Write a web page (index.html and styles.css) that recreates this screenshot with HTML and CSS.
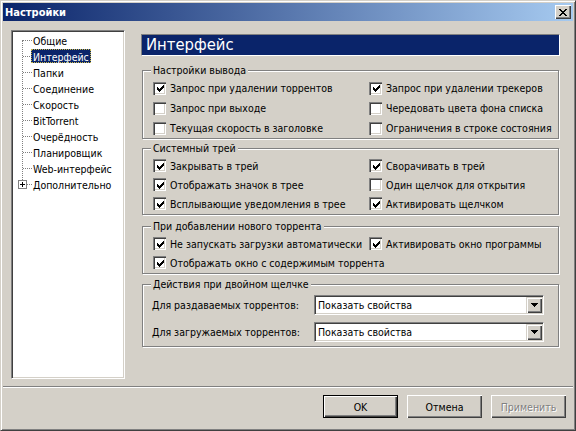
FILE: index.html
```html
<!DOCTYPE html>
<html lang="ru">
<head>
<meta charset="utf-8">
<title>Настройки</title>
<link rel="stylesheet" href="styles.css">
</head>
<body>
<svg class="defs" width="0" height="0">
  <defs>
    <path id="chk" d="M0 2h1v3H0z M1 3h1v3H1z M2 4h1v3H2z M3 3h1v3H3z M4 2h1v3H4z M5 1h1v3H5z M6 0h1v3H6z"/>
  </defs>
</svg>
<div class="window">
  <div class="titlebar">
    <span class="title">Настройки</span>
    <span class="close">
      <svg width="8" height="7" viewBox="0 0 8 7"><path d="M0 0h2v1H0z M6 0h2v1H6z M1 1h2v1H1z M5 1h2v1H5z M2 2h4v1H2z M3 3h2v1H3z M2 4h4v1H2z M1 5h2v1H1z M5 5h2v1H5z M0 6h2v1H0z M6 6h2v1H6z" fill="#000"/></svg>
    </span>
  </div>
  <div class="main">
    <div class="tree">
      <ul class="nodes">
        <li><span class="txt">Общие</span></li>
        <li class="sel"><span class="txt">Интерфейс</span></li>
        <li><span class="txt">Папки</span></li>
        <li><span class="txt">Соединение</span></li>
        <li><span class="txt">Скорость</span></li>
        <li><span class="txt">BitTorrent</span></li>
        <li><span class="txt">Очерёдность</span></li>
        <li><span class="txt">Планировщик</span></li>
        <li><span class="txt">Web-интерфейс</span></li>
        <li class="exp"><span class="plus"><svg width="5" height="5" viewBox="0 0 5 5"><path d="M0 2h5v1H0z M2 0h1v5H2z" fill="#000"/></svg></span><span class="txt">Дополнительно</span></li>
      </ul>
    </div>
    <div class="panel">
      <div class="header">Интерфейс</div>

      <div class="group g1">
        <div class="legend">Настройки вывода</div>
        <div class="grid">
          <div class="row"><span class="cb"><svg width="7" height="7"><use href="#chk"/></svg></span>Запрос при удалении торрентов</div>
          <div class="row"><span class="cb"><svg width="7" height="7"><use href="#chk"/></svg></span>Запрос при удалении трекеров</div>
          <div class="row"><span class="cb"></span>Запрос при выходе</div>
          <div class="row"><span class="cb"></span>Чередовать цвета фона списка</div>
          <div class="row"><span class="cb"></span>Текущая скорость в заголовке</div>
          <div class="row"><span class="cb"></span>Ограничения в строке состояния</div>
        </div>
      </div>

      <div class="group g2">
        <div class="legend">Системный трей</div>
        <div class="grid">
          <div class="row"><span class="cb"><svg width="7" height="7"><use href="#chk"/></svg></span>Закрывать в трей</div>
          <div class="row"><span class="cb"><svg width="7" height="7"><use href="#chk"/></svg></span>Сворачивать в трей</div>
          <div class="row"><span class="cb"><svg width="7" height="7"><use href="#chk"/></svg></span>Отображать значок в трее</div>
          <div class="row"><span class="cb"></span>Один щелчок для открытия</div>
          <div class="row"><span class="cb"><svg width="7" height="7"><use href="#chk"/></svg></span>Всплывающие уведомления в трее</div>
          <div class="row"><span class="cb"><svg width="7" height="7"><use href="#chk"/></svg></span>Активировать щелчком</div>
        </div>
      </div>

      <div class="group g3">
        <div class="legend">При добавлении нового торрента</div>
        <div class="grid">
          <div class="row"><span class="cb"><svg width="7" height="7"><use href="#chk"/></svg></span>Не запускать загрузки автоматически</div>
          <div class="row"><span class="cb"><svg width="7" height="7"><use href="#chk"/></svg></span>Активировать окно программы</div>
          <div class="row wide"><span class="cb"><svg width="7" height="7"><use href="#chk"/></svg></span>Отображать окно с содержимым торрента</div>
        </div>
      </div>

      <div class="group g4">
        <div class="legend">Действия при двойном щелчке</div>
        <div class="combos">
          <span class="clabel">Для раздаваемых торрентов:</span>
          <div class="combo"><span class="cval">Показать свойства</span><span class="cbtn"><svg width="7" height="4" viewBox="0 0 7 4"><path d="M0 0h7v1H0z M1 1h5v1H1z M2 2h3v1H2z M3 3h1v1H3z" fill="#000"/></svg></span></div>
          <span class="clabel">Для загружаемых торрентов:</span>
          <div class="combo"><span class="cval">Показать свойства</span><span class="cbtn"><svg width="7" height="4" viewBox="0 0 7 4"><path d="M0 0h7v1H0z M1 1h5v1H1z M2 2h3v1H2z M3 3h1v1H3z" fill="#000"/></svg></span></div>
        </div>
      </div>
    </div>
  </div>
  <div class="sep"></div>
  <div class="buttons">
    <button class="btn default">OK</button>
    <button class="btn">Отмена</button>
    <button class="btn disabled">Применить</button>
  </div>
</div>
</body>
</html>
```
FILE: styles.css
```css
* { box-sizing: border-box; }
html, body { margin: 0; padding: 0; }
body {
  width: 576px; height: 431px; overflow: hidden;
  background: #d4d0c8;
  font-family: "DejaVu Sans Condensed", "DejaVu Sans", sans-serif;
  font-stretch: condensed;
  font-size: 10.5px; color: #000;
}
.defs { position: absolute; }
.window {
  width: 576px; height: 431px;
  background: #d4d0c8;
  border: 1px solid; border-color: #d4d0c8 #404040 #404040 #d4d0c8;
  box-shadow: inset 1px 1px 0 #fff, inset -1px -1px 0 #808080;
  padding: 2px;
  display: flex; flex-direction: column;
}
.titlebar {
  height: 18px; flex: none;
  background: linear-gradient(to right, #0a246a, #a6caf0);
  display: flex; align-items: center; justify-content: space-between;
  padding: 0 2px 0 2px;
  color: #fff; font-weight: bold; font-size: 11px;
}
.close {
  width: 16px; height: 14px;
  background: #d4d0c8;
  box-shadow: inset 1px 1px 0 #fff, inset -1px -1px 0 #404040, inset -2px -2px 0 #808080;
  display: flex; align-items: center; justify-content: center;
  padding-right: 1px;
}
.close svg { display: block; }
.main { display: flex; padding: 9px 0 0 8px; flex: none; }
.tree {
  width: 114px; height: 349px; flex: none;
  background: #fff;
  border: 1px solid; border-color: #808080 #fff #fff #808080;
  box-shadow: inset 1px 1px 0 #404040, inset -1px -1px 0 #d4d0c8;
  padding: 1px;
}
.nodes { list-style: none; margin: 0; padding: 0; position: relative; }
.nodes::before {
  content: ""; position: absolute; left: 9px; top: 8px; height: 144px;
  border-left: 1px dotted #808080;
}
.nodes li { position: relative; height: 16px; padding-left: 19px; display: flex; align-items: center; }
.nodes li::before {
  content: ""; position: absolute; left: 10px; top: 8px; width: 9px;
  border-top: 1px dotted #808080;
}
.txt { padding: 0 1px; line-height: 14px; height: 14px; white-space: nowrap; border: 1px solid transparent; margin-left: -1px; }
.sel .txt { background: #0a246a; color: #fff; border: 1px dotted #c8b84a; }
.plus {
  position: absolute; left: 5px; top: 4px; width: 9px; height: 9px; z-index: 1;
  background: #fff; border: 1px solid #808080;
  display: flex; align-items: center; justify-content: center;
}
.plus svg { display: block; }
.panel { width: 419px; margin-left: 16px; flex: none; }
.header {
  margin-top: 4px; height: 22px;
  background: #0a246a; color: #fff;
  border: 1px solid; border-color: #808080 #fff #fff #808080;
  font-size: 16.5px; line-height: 20px; padding-left: 4px;
}
.group {
  margin-left: 1px; width: 417px;
  border: 1px solid #808080;
  box-shadow: inset 1px 1px 0 #fff, 1px 1px 0 #fff;
  padding: 0 0 0 10px;
}
.legend {
  display: table; margin: -7px 0 0 -2px; padding: 0 2px;
  background: #d4d0c8; line-height: 13px; height: 13px; white-space: nowrap;
}
.g1 { margin-top: 14px; }
.g1 .legend { margin-bottom: 1px; }
.g2 { margin-top: 9px; padding-bottom: 1px; }
.g2 .legend { margin-bottom: 1px; }
.g3 { margin-top: 11px; padding-bottom: 1px; }
.g3 .legend { margin-bottom: 1px; }
.g4 { margin-top: 10px; padding-bottom: 4px; padding-left: 9px; }
.g4 .legend { margin-left: -1px; margin-bottom: 4px; }
.grid { display: grid; grid-template-columns: 216px 1fr; }
.row { height: 19px; display: flex; align-items: center; white-space: nowrap; }
.g1 .row { height: 20px; }
.row.wide { grid-column: 1 / 3; }
.cb {
  width: 13px; height: 13px; flex: none; margin-right: 4px;
  background: #fff;
  box-shadow: inset 1px 1px 0 #808080, inset 2px 2px 0 #404040, inset -1px -1px 0 #fff, inset -2px -2px 0 #d4d0c8;
  display: flex; align-items: center; justify-content: center;
}
.cb svg { display: block; margin-left: 1px; margin-top: 1px; }
.combos { display: grid; grid-template-columns: 162px 230px; row-gap: 7px; align-items: center; }
.clabel { white-space: nowrap; }
.combo {
  height: 20px; background: #fff;
  border: 1px solid; border-color: #808080 #fff #fff #808080;
  box-shadow: inset 1px 1px 0 #404040, inset -1px -1px 0 #d4d0c8;
  padding: 1px; display: flex; align-items: center;
}
.cval { flex: 1; padding-left: 2px; }
.cbtn {
  width: 16px; height: 16px; background: #d4d0c8;
  box-shadow: inset 1px 1px 0 #d4d0c8, inset 2px 2px 0 #fff, inset -1px -1px 0 #404040, inset -2px -2px 0 #808080;
  display: flex; align-items: center; justify-content: center;
}
.cbtn svg { display: block; }
.sep {
  margin-top: 7px; height: 2px; flex: none;
  border-top: 1px solid #808080; border-bottom: 1px solid #fff;
}
.buttons { display: flex; justify-content: flex-end; gap: 9px; padding: 7px 7px 0 0; }
.btn {
  width: 75px; height: 23px; padding: 0;
  font-family: inherit; font-stretch: inherit; font-size: 10.5px; color: #000;
  background: #d4d0c8; border: none;
  box-shadow: inset 1px 1px 0 #fff, inset -1px -1px 0 #404040, inset -2px -2px 0 #808080;
}
.btn.default {
  border: 1px solid #000;
  box-shadow: inset 1px 1px 0 #fff, inset -1px -1px 0 #404040, inset -2px -2px 0 #808080;
}
.btn.disabled { color: #808080; text-shadow: 1px 1px 0 #fff; }
```
